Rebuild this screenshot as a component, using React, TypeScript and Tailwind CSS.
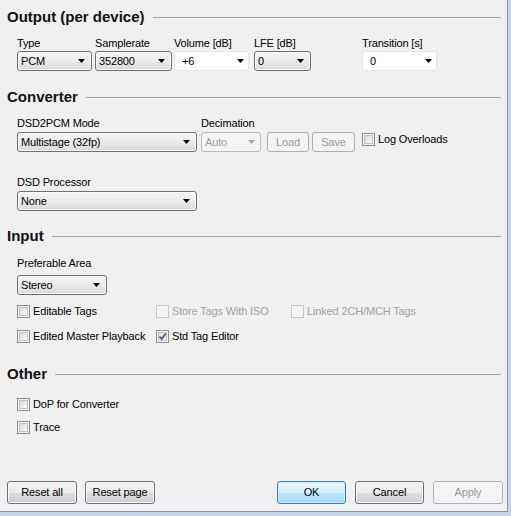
const font = "font-['Liberation_Sans',Arial,sans-serif]";

function Arrow({ disabled }: { disabled?: boolean }) {
  return (
    <svg width="7" height="4" viewBox="0 0 7 4" className="shrink-0">
      <polygon points="0,0 7,0 3.5,4" fill={disabled ? "#a3a3a3" : "#000"} />
    </svg>
  );
}

function Combo({
  value,
  w,
  kind = "ro",
}: {
  value: string;
  w: string;
  kind?: "ro" | "edit" | "off";
}) {
  const base =
    "h-[20px] flex items-center justify-between rounded-[3px] border text-[11px] leading-[13px] tracking-[-0.15px] " + w;
  if (kind === "edit")
    return (
      <div className={base + " bg-white border-[#e3e4e8] pl-[7px] pr-[4px]"}>
        <span className="text-black">{value}</span>
        <Arrow />
      </div>
    );
  if (kind === "off")
    return (
      <div className={base + " bg-[#f4f4f4] border-[#b9bcbf] pl-[3px] pr-[5px]"}>
        <span className="text-[#9f9f9f]">{value}</span>
        <Arrow disabled />
      </div>
    );
  return (
    <div
      className={
        base +
        " border-[#707070] bg-linear-to-b from-[#f5f5f5] via-[#ebebeb] to-[#dadada] shadow-[inset_0_0_0_1px_#fbfbfb] pl-[3px] pr-[6px]"
      }
    >
      <span className="text-black">{value}</span>
      <Arrow />
    </div>
  );
}

function Btn({
  label,
  w,
  kind = "normal",
  h = "h-[23px]",
}: {
  label: string;
  w: string;
  kind?: "normal" | "default" | "off";
  h?: string;
}) {
  let cls =
    "border-[#707070] bg-[linear-gradient(#f2f2f2_0%,#ebebeb_50%,#dddddd_50%,#cfcfcf_100%)] text-black shadow-[inset_0_0_0_1px_#fafafa]";
  if (kind === "default")
    cls =
      "border-[#3c7fb1] bg-[linear-gradient(#eaf6fd_0%,#d9f0fc_50%,#bee6fd_50%,#a7d9f5_100%)] text-black shadow-[inset_0_0_0_1px_#c9eafd]";
  if (kind === "off") cls = "border-[#adb2b5] bg-[#f4f4f4] text-[#9a9a9a]";
  return (
    <div
      className={`${w} ${h} ${cls} flex items-center justify-center rounded-[3px] border text-[11px] leading-[13px] tracking-[-0.15px]`}
    >
      {label}
    </div>
  );
}

function Check({
  label,
  checked,
  disabled,
}: {
  label: string;
  checked?: boolean;
  disabled?: boolean;
}) {
  return (
    <div className="flex items-center gap-[3px]">
      <div
        className={
          "w-[13px] h-[13px] border p-[1px] shrink-0 " +
          (disabled ? "border-[#c8c8c8] bg-[#f6f6f6]" : "border-[#8e8f8f] bg-[#f4f4f4]")
        }
      >
        <div
          className={
            "w-full h-full relative " +
            (disabled
              ? "bg-[#f4f4f4]"
              : "border border-[#c2c2c2] bg-linear-to-br from-[#d9d9d9] to-[#fbfbfb]")
          }
        >
          {checked && (
            <svg width="9" height="9" viewBox="0 0 9 9" className="absolute -left-[1px] -top-[1px]">
              <path d="M1.5 4.5 L3.6 7 L7.8 1.5" fill="none" stroke="#4a5d8a" strokeWidth="1.8" />
            </svg>
          )}
        </div>
      </div>
      <span
        className={
          "text-[11px] leading-[13px] tracking-[-0.15px] " + (disabled ? "text-[#a1a1a1]" : "text-black")
        }
      >
        {label}
      </span>
    </div>
  );
}

function Header({ title }: { title: string }) {
  return (
    <div className="flex items-center h-[18px] pl-[7px] pr-[6px]">
      <span className="text-[15px] font-bold leading-[18px] text-[#111]">{title}</span>
      <div className="flex-1 ml-[8px] h-px bg-[#a7a7a7]" />
    </div>
  );
}

function Label({ text, w }: { text: string; w: string }) {
  return (
    <div className={`${w} text-[11px] leading-[13px] tracking-[-0.15px] text-black shrink-0`}>{text}</div>
  );
}

export default function App() {
  return (
    <div className={`w-[511px] h-[516px] bg-[#c7d7ea] ${font}`}>
      <div className="w-[508px] h-[512px] bg-[#f0f0f0] border-r border-b border-[#8396ad] flex flex-col pt-[8px]">
        <Header title="Output (per device)" />
        <div className="pl-[17px]">
          <div className="flex mt-[11px]">
            <Label text="Type" w="w-[78px]" />
            <Label text="Samplerate" w="w-[79px]" />
            <Label text="Volume [dB]" w="w-[80px]" />
            <Label text="LFE [dB]" w="w-[108px]" />
            <Label text="Transition [s]" w="w-[80px]" />
          </div>
          <div className="flex mt-[1px]">
            <Combo value="PCM" w="w-[75px] mr-[3px]" />
            <Combo value="352800" w="w-[77px] mr-[2px]" />
            <Combo value="+6" w="w-[75px] mr-[5px]" kind="edit" />
            <Combo value="0" w="w-[57px] mr-[51px]" />
            <Combo value="0" w="w-[75px]" kind="edit" />
          </div>
        </div>

        <div className="mt-[17px]">
          <Header title="Converter" />
        </div>
        <div className="pl-[17px]">
          <div className="flex mt-[11px]">
            <Label text="DSD2PCM Mode" w="w-[184px]" />
            <Label text="Decimation" w="w-[80px]" />
          </div>
          <div className="flex items-start mt-[2px]">
            <Combo value="Multistage (32fp)" w="w-[180px] mr-[4px]" />
            <Combo value="Auto" w="w-[60px] mr-[6px]" kind="off" />
            <Btn label="Load" w="w-[42px] mr-[3px]" h="h-[20px]" kind="off" />
            <Btn label="Save" w="w-[43px] mr-[7px]" h="h-[20px]" kind="off" />
            <div className="mt-[1px]">
              <Check label="Log Overloads" />
            </div>
          </div>
          <div className="mt-[24px]">
            <Label text="DSD Processor" w="w-[180px]" />
          </div>
          <div className="mt-[2px]">
            <Combo value="None" w="w-[180px]" />
          </div>
        </div>

        <div className="mt-[16px]">
          <Header title="Input" />
        </div>
        <div className="pl-[17px]">
          <div className="mt-[12px]">
            <Label text="Preferable Area" w="w-[120px]" />
          </div>
          <div className="mt-[5px]">
            <Combo value="Stereo" w="w-[90px]" />
          </div>
          <div className="flex mt-[10px]">
            <div className="w-[139px]">
              <Check label="Editable Tags" />
            </div>
            <div className="w-[135px]">
              <Check label="Store Tags With ISO" disabled />
            </div>
            <Check label="Linked 2CH/MCH Tags" disabled />
          </div>
          <div className="flex mt-[12px]">
            <div className="w-[139px]">
              <Check label="Edited Master Playback" />
            </div>
            <Check label="Std Tag Editor" checked />
          </div>
        </div>

        <div className="mt-[22px]">
          <Header title="Other" />
        </div>
        <div className="pl-[17px]">
          <div className="mt-[15px]">
            <Check label="DoP for Converter" />
          </div>
          <div className="mt-[10px]">
            <Check label="Trace" />
          </div>
        </div>

        <div className="mt-auto mb-[7px] flex pl-[7px] pr-[4px]">
          <Btn label="Reset all" w="w-[70px] mr-[8px]" />
          <Btn label="Reset page" w="w-[70px]" />
          <div className="flex-1" />
          <Btn label="OK" w="w-[69px] mr-[9px]" kind="default" />
          <Btn label="Cancel" w="w-[69px] mr-[9px]" />
          <Btn label="Apply" w="w-[70px]" kind="off" />
        </div>
      </div>
    </div>
  );
}
